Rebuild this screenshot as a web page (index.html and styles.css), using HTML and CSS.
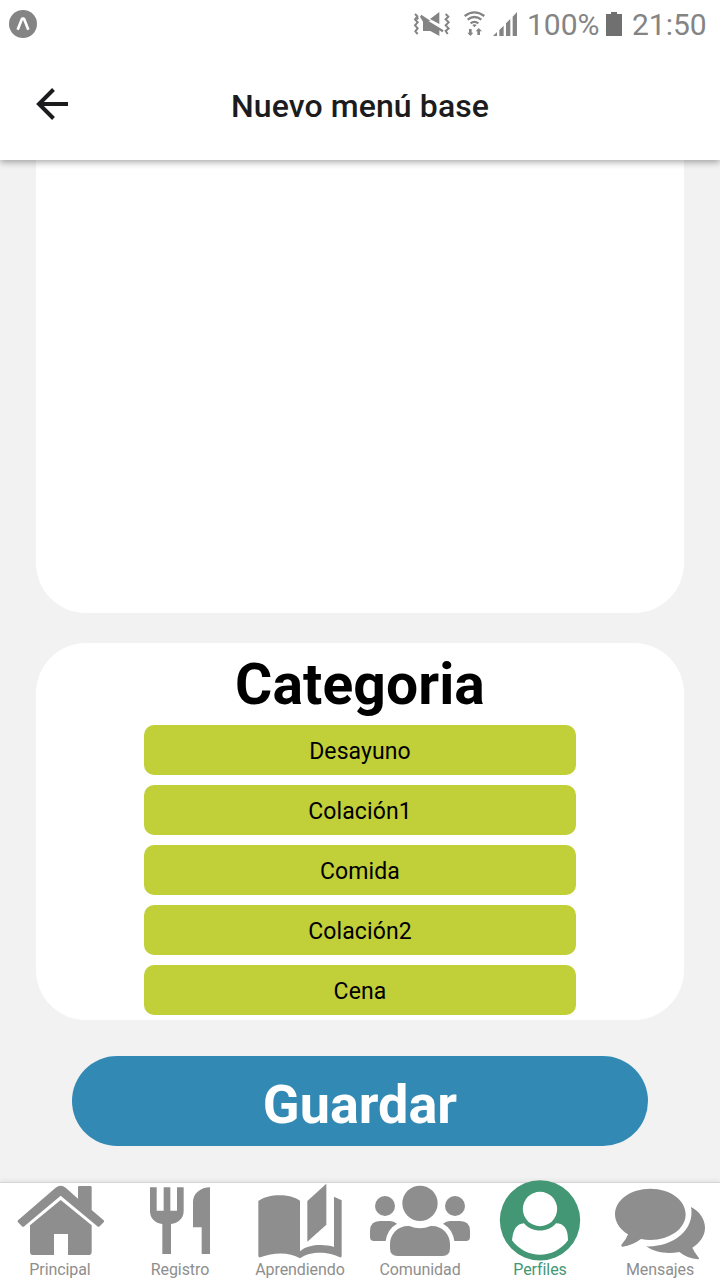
FILE: index.html
```html
<!DOCTYPE html>
<html lang="es">
<head>
<meta charset="utf-8">
<title>Nuevo menú base</title>
<link rel="stylesheet" href="styles.css">
</head>
<body>
<div class="app">
  <header class="top">
    <div class="status">
      <svg class="app-badge" viewBox="27 27 87 90"><circle cx="69" cy="72" r="42"/><path class="mark" d="M53 89 66 56H72L85 89"/></svg>
      <svg class="signals" viewBox="36 0 324 150">
        <path class="zig" d="M45 42l7 7-7 9 8 9-8 9 8 9-7 9 7 8M55 53l-5 5M137 42l8 8-8 8 9 9-9 9 9 9-9 8 6 9"/>
        <path d="M118 36V72L90 57ZM69 60H80L131 91 127 97 118 91V108L91 93H69V65L60 50 64 44 93 64Z"/>
        <path class="wave" d="M194 48Q223 26 253 48M203 59Q223 43 244 59M212 70Q223 61 235 70"/>
        <path d="M217 75Q223 70 230 75L223 82ZM207 87H215V98H220L211 108 202 98H207ZM232 105V94H227L236 84 246 94H240V105Z"/>
        <path d="M279 108 291 96V108ZM298 90 311 77V108H298ZM318 70 331 57V108H318ZM338 50 351 36V108H338Z"/>
      </svg>
      <span class="percent">100%</span>
      <svg class="battery" viewBox="0 0 16 24"><path d="M0 2H5V0H11V2H16V24H0Z"/></svg>
      <span class="clock">21:50</span>
    </div>
    <div class="titlebar">
      <svg class="back" viewBox="0 0 32 32"><path d="M17.5 1.5 3 16 17.5 30.5M2 16H32"/></svg>
      <h1>Nuevo menú base</h1>
    </div>
  </header>
  <main class="content">
    <section class="card card-menu"></section>
    <section class="card card-category">
      <h2>Categoria</h2>
      <div class="option">Desayuno</div>
      <div class="option">Colación1</div>
      <div class="option">Comida</div>
      <div class="option">Colación2</div>
      <div class="option">Cena</div>
    </section>
    <button class="save">Guardar</button>
  </main>
  <nav class="tabs">
    <a class="tab"><svg viewBox="0 30 360 246"><path d="M54 151 167 53Q182 42 197 53L234 86V52Q234 48 238 48H271Q275 48 275 52V120L311 151Q314 154 311 157L299 169Q296 172 292 169L182 77 73 169Q69 172 66 169L54 157Q51 154 54 151Z"/><path d="M90 166 182 90 275 166V245Q275 255 265 255H204V192H162V255H100Q90 255 90 245Z"/></svg><span>Principal</span></a>
    <a class="tab"><svg viewBox="0 30 360 246"><path d="M90 52H110V122H131V52H151V122H171V52H191V124C191 145 174 161 153 162V252H127V162C106 161 90 145 90 124ZM270 52V252H245V172H219V96C219 71 242 52 270 52Z"/></svg><span>Registro</span></a>
    <a class="tab"><svg viewBox="0 30 360 246"><path d="M55 93C85 70 151 70 180 92V244C205 222 253 222 282 231V80L305 91V257Q305 263 300 262C270 246 214 240 180 265C148 245 100 247 61 262Q55 263 55 257ZM202 93 259 41V164L202 215Z"/></svg><span>Aprendiendo</span></a>
    <a class="tab"><svg viewBox="0 30 360 246"><circle cx="75" cy="108" r="30"/><circle cx="285" cy="108" r="30"/><circle cx="180" cy="100" r="53"/><path d="M60 153H90Q101 153 111 161Q82 177 77 213H42Q30 213 30 201V183Q30 153 60 153ZM300 153H270Q259 153 249 161Q278 177 283 213H318Q330 213 330 201V183Q330 153 300 153ZM144 168H148Q180 182 212 168H216C246 168 270 192 270 222V235Q270 258 247 258H113Q90 258 90 235V222C90 192 114 168 144 168Z"/></svg><span>Comunidad</span></a>
    <a class="tab active"><svg viewBox="0 30 360 246"><circle cx="180" cy="151" r="120.5"/><g class="person"><circle cx="180" cy="117" r="51.5"/><path d="M132 160C156 189 204 189 228 160Q264 160 264 211C221 269 139 269 96 211Q100 162 132 160Z"/></g></svg><span>Perfiles</span></a>
    <a class="tab"><svg viewBox="0 30 360 246"><path d="M151 56C210 56 257 90 257 133C257 176 210 210 151 210Q137 210 123 207Q98 226 67 230Q61 228 66 222Q79 208 84 193C60 179 45 157 45 133C45 90 92 56 151 56ZM273 111C298 123 315 148 315 173C315 197 300 218 277 233Q283 247 294 260Q300 266 294 268Q263 266 238 246C201 253 163 247 139 229C216 232 286 181 273 111Z"/></svg><span>Mensajes</span></a>
  </nav>
</div>
</body>
</html>
```
FILE: styles.css
```css
* { box-sizing: border-box; }
body { margin: 0; font-family: Roboto, sans-serif; }
svg { display: block; flex: none; }
.app {
  width: 720px;
  height: 1280px;
  display: flex;
  flex-direction: column;
  overflow: hidden;
  background: #f2f2f2;
}
.top {
  height: 160px;
  flex: none;
  background: #fff;
  box-shadow: 0 2px 7px rgba(0, 0, 0, .36);
  z-index: 1;
}
.status {
  height: 50px;
  padding-left: 9px;
  display: flex;
  align-items: center;
  color: #848484;
  fill: #848484;
  font-size: 30px;
  line-height: 50px;
}
.app-badge { width: 29px; height: 30px; margin-top: -2px; }
.mark { fill: none; stroke: #fff; stroke-width: 8; stroke-linejoin: bevel; }
.signals { width: 108px; height: 50px; margin-left: 374px; }
.zig { fill: none; stroke: #848484; stroke-width: 6; }
.wave { fill: none; stroke: #848484; stroke-width: 7; }
.percent { width: 73px; margin-left: 7px; white-space: nowrap; }
.battery { width: 16px; height: 24px; margin-left: 6px; margin-top: -2px; fill: #707070; }
.clock { margin-left: 10px; }
.titlebar {
  height: 110px;
  padding: 0 36px;
  display: grid;
  grid-template-columns: 32px 1fr 32px;
  align-items: center;
  color: #1c1c1e;
}
.back {
  width: 32px;
  height: 32px;
  margin-top: -2px;
  fill: none;
  stroke: #1c1c1e;
  stroke-width: 4;
}
h1 { margin: 2px 0 0; text-align: center; font-size: 32px; font-weight: 500; line-height: 42px; letter-spacing: .1px; }
.content { height: 1022px; flex: none; padding: 0 36px; }
.card { background: #fff; }
.card-menu { height: 453px; border-radius: 0 0 50px 50px; }
.card-category {
  height: 377px;
  margin-top: 30px;
  border-radius: 50px;
  display: flex;
  flex-direction: column;
  align-items: center;
}
h2 { margin: 0 0 5px; font-size: 57px; line-height: 77px; padding-top: 3px; height: 77px; font-weight: 700; letter-spacing: .1px; }
.option {
  width: 432px;
  height: 50px;
  margin-bottom: 10px;
  border-radius: 10px;
  background: #c1cf39;
  text-align: center;
  font-size: 23px;
  line-height: 54px;
  letter-spacing: .1px;
}
.save {
  display: block;
  width: 576px;
  height: 90px;
  margin: 36px auto 0;
  padding: 8px 0 0;
  border: 0;
  border-radius: 45px;
  background: #328ab4;
  color: #fff;
  font: 700 54px/82px Roboto, sans-serif;
}
.tabs {
  height: 98px;
  flex: none;
  display: grid;
  grid-template-columns: repeat(6, 120px);
  border-top: 1px solid #d5d5d5;
  background: #fff;
  box-shadow: 0 -1px 5px rgba(0, 0, 0, .08);
}
.tab { color: #8e8e8e; fill: #8e8e8e; text-align: center; font-size: 16px; letter-spacing: -.08px; }
.tab svg { width: 120px; height: 82px; margin-top: -3px; }
.tab span { display: block; margin-top: -2px; line-height: 20px; }
.active { color: #439775; fill: #439775; }
.person { fill: #fff; }
```
